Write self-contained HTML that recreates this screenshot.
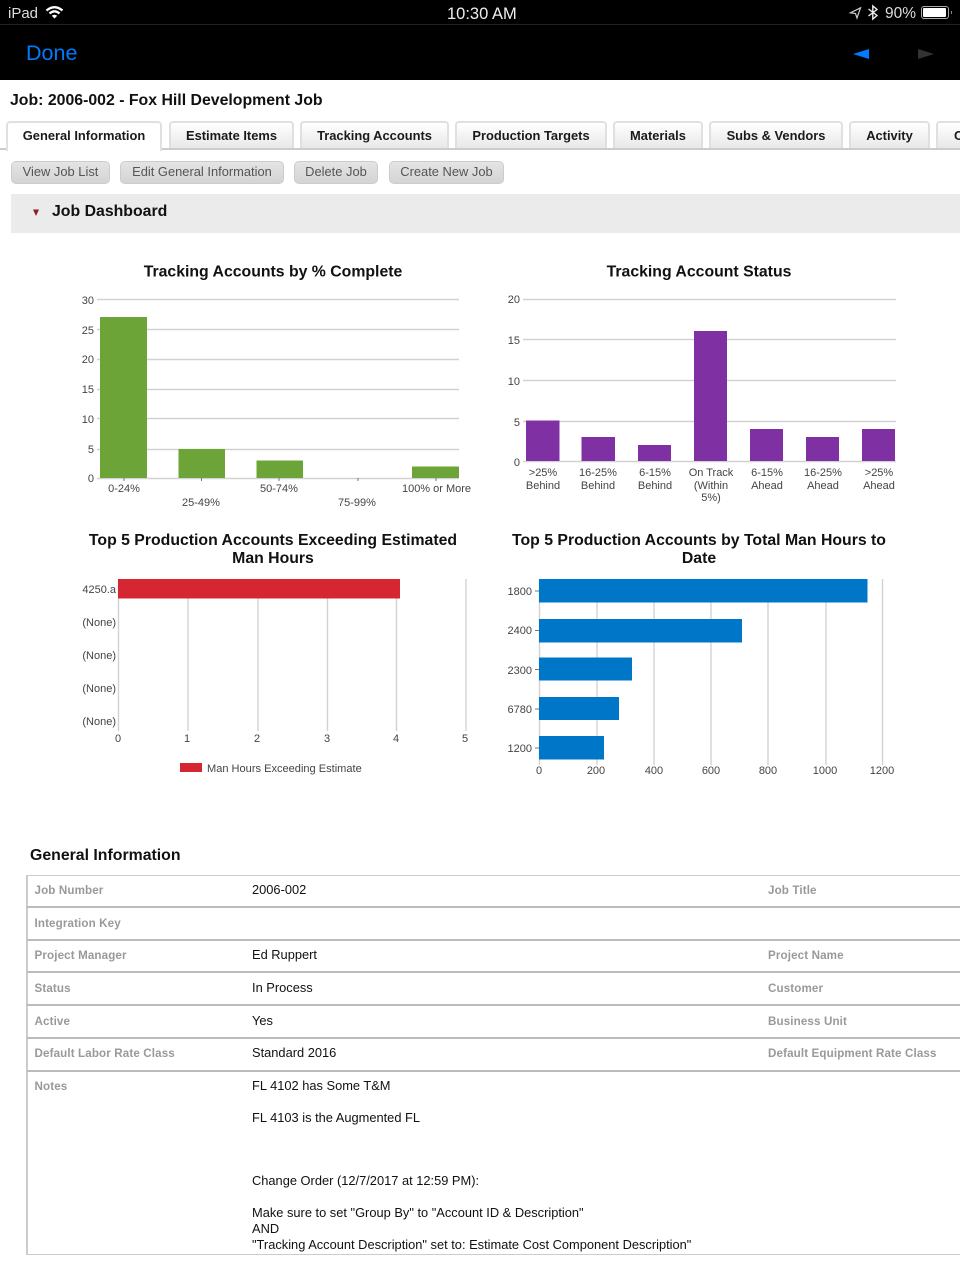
<!DOCTYPE html>
<html><head><meta charset="utf-8"><title>Job Dashboard</title>
<style>
html,body{margin:0;padding:0;background:#fff;width:960px;height:1280px;overflow:hidden}
body{position:relative;font-family:"Liberation Sans",sans-serif;color:#000}
#w{position:absolute;left:0;top:0;width:960px;height:1280px;overflow:hidden;background:#fff;filter:blur(.35px)}
.a{position:absolute;white-space:nowrap}
.tab{position:absolute;top:121px;height:27px;box-sizing:border-box;border:2px solid #e0e0e0;border-bottom:0;border-radius:4px 4px 0 0;background:linear-gradient(#fff,#e8e8e8);font:bold 12.9px/26px "Liberation Sans",sans-serif;color:#1a1a1a;text-align:center;white-space:nowrap;overflow:hidden}
.btn{position:absolute;top:161px;height:23px;box-sizing:border-box;border:1px solid #ccc;border-radius:5px;background:linear-gradient(#e4e4e4,#d4d4d4);font:12.9px/20px "Liberation Sans",sans-serif;color:#555;text-align:center;white-space:nowrap}
.l{position:absolute;left:27px;right:0;height:2px;background:#bbb}
.k{position:absolute;margin-top:1px;font:bold 11.6px/16px "Liberation Sans",sans-serif;color:#999;white-space:nowrap;letter-spacing:.13px}
.v{position:absolute;left:252px;font:12.85px/16px "Liberation Sans",sans-serif;color:#111;white-space:nowrap}
svg text{font-family:"Liberation Sans",sans-serif}
.t{font-weight:bold;font-size:15.82px;fill:#111;text-anchor:middle}
.c{font-size:11px;fill:#444;text-anchor:middle}
.r{font-size:11px;fill:#444;text-anchor:end}
</style></head><body><div id="w">
<div class="a" style="left:0;top:0;width:960px;height:80px;background:#000"></div>
<div class="a" style="left:0;top:24px;width:960px;height:1px;background:#222"></div>
<div class="a" style="left:8px;top:5px;font-size:15px;line-height:18px;color:#ddd">iPad</div>
<div class="a" style="left:447px;top:4.500px;font-size:16.500px;line-height:18px;color:#eee">10:30 AM</div>
<div class="a" style="left:885px;top:5px;font-size:15.500px;line-height:18px;color:#ddd">90%</div>
<div class="a" style="left:26px;top:40px;font-size:21.5px;line-height:26px;color:#007aff">Done</div>
<svg class="a" style="left:0;top:0" width="960" height="80" viewBox="0 0 960 80">
<g fill="none" stroke="#fff" stroke-width="2.300">
<path d="M46.500 10.500Q54.500 3.800 62.500 10.500"/><path d="M49.500 13.500Q54.500 9.200 59.500 13.500"/>
</g>
<path d="M51.800 15.800Q54.500 13.800 57.200 15.800L54.500 18.500Z" fill="#fff"/>
<path d="M850.500 12.800L860.500 7.800L857 18L855.500 13.500Z" fill="none" stroke="#ccc" stroke-width="1.200"/>
<path d="M868.500 9L877 15.500L872.800 19V6L877 9.500L868.500 16" fill="none" stroke="#eee" stroke-width="1.400"/>
<rect x="921.500" y="6.500" width="27" height="12" rx="2.500" fill="none" stroke="#aaa"/>
<rect x="923" y="8" width="23" height="9" rx="1" fill="#fff"/>
<path d="M951 11h1v3h-1z" fill="#888"/>
<path d="M869 49V59L853 54Z" fill="#007aff"/>
<path d="M918 49V59L934 54Z" fill="#333"/>
</svg>

<div class="a" style="left:10px;top:91px;font-weight:bold;font-size:15.85px;line-height:20px;color:#111">Job: 2006-002 - Fox Hill Development Job</div>

<div class="a" style="left:0;top:148px;width:960px;height:2px;background:#ccc"></div>
<div class="tab" style="left:6px;width:156px;height:30px;background:#fff">General Information</div>
<div class="tab" style="left:169px;width:125px">Estimate Items</div>
<div class="tab" style="left:300px;width:149px">Tracking Accounts</div>
<div class="tab" style="left:455px;width:152px">Production Targets</div>
<div class="tab" style="left:613px;width:90px">Materials</div>
<div class="tab" style="left:709px;width:134px">Subs &amp; Vendors</div>
<div class="tab" style="left:849px;width:81px">Activity</div>
<div class="tab" style="left:936px;width:60px;text-align:left;padding-left:16px">C</div>

<div class="btn" style="left:11px;width:99px">View Job List</div>
<div class="btn" style="left:120px;width:164px">Edit General Information</div>
<div class="btn" style="left:294px;width:84px">Delete Job</div>
<div class="btn" style="left:389px;width:115px">Create New Job</div>

<div class="a" style="left:11px;top:194px;width:949px;height:39px;background:#ebebeb"></div>
<svg class="a" style="left:32px;top:209px" width="8" height="8"><path d="M1 0.500H7L4 7Z" fill="#8e1f22"/></svg>
<div class="a" style="left:52px;top:202px;font-weight:bold;font-size:15.85px;line-height:20px;color:#111">Job Dashboard</div>

<svg class="a" style="left:0;top:250px" width="960" height="540" viewBox="0 250 960 540">
<text class="t" x="273" y="276.500">Tracking Accounts by % Complete</text>
<g stroke="#d2d2d2" stroke-width="1.400">
<path d="M97 299.500H459M97 329.500H459M97 359.500H459M97 389.500H459M97 418.500H459M97 449.500H459M97 478.500H459"/>
</g>
<g stroke="#777" stroke-width="1"><path d="M124 478v3M201.500 478v3M279 478v3M358 478v3M436 478v3"/></g>
<g fill="#6ca437">
<rect x="100" y="317" width="47" height="161"/>
<rect x="178.500" y="449" width="46.500" height="29"/>
<rect x="256.500" y="460.500" width="46.500" height="17.500"/>
<rect x="412" y="466.500" width="47" height="11.500"/>
</g>
<text class="r" x="94" y="304">30</text><text class="r" x="94" y="334">25</text><text class="r" x="94" y="363">20</text><text class="r" x="94" y="393">15</text><text class="r" x="94" y="423">10</text><text class="r" x="94" y="453">5</text><text class="r" x="94" y="482">0</text>
<text class="c" x="124" y="492">0-24%</text>
<text class="c" x="201" y="506">25-49%</text>
<text class="c" x="279" y="492">50-74%</text>
<text class="c" x="357" y="506">75-99%</text>
<text class="c" x="436.500" y="492">100% or More</text>

<text class="t" x="699" y="276.500">Tracking Account Status</text>
<g stroke="#d2d2d2" stroke-width="1.400"><path d="M523 299.500H896M523 339.500H896M523 380.500H896M523 421.500H896M523 461.500H896"/></g>
<g fill="#7f31a4">
<rect x="526" y="420.500" width="33.500" height="40.500"/>
<rect x="581.500" y="437" width="33.500" height="24"/>
<rect x="638" y="445" width="33" height="16"/>
<rect x="694" y="331" width="33" height="130"/>
<rect x="750" y="429" width="33" height="32"/>
<rect x="806" y="437" width="33" height="24"/>
<rect x="862" y="429" width="33" height="32"/>
</g>
<text class="r" x="520" y="303">20</text><text class="r" x="520" y="344">15</text><text class="r" x="520" y="385">10</text><text class="r" x="520" y="426">5</text><text class="r" x="520" y="466">0</text>
<text class="c" x="543" y="476">&gt;25%</text><text class="c" x="543" y="489">Behind</text>
<text class="c" x="598" y="476">16-25%</text><text class="c" x="598" y="489">Behind</text>
<text class="c" x="655" y="476">6-15%</text><text class="c" x="655" y="489">Behind</text>
<text class="c" x="711" y="476">On Track</text><text class="c" x="711" y="489">(Within</text><text class="c" x="711" y="501">5%)</text>
<text class="c" x="767" y="476">6-15%</text><text class="c" x="767" y="489">Ahead</text>
<text class="c" x="823" y="476">16-25%</text><text class="c" x="823" y="489">Ahead</text>
<text class="c" x="879" y="476">&gt;25%</text><text class="c" x="879" y="489">Ahead</text>

<text class="t" x="273" y="545">Top 5 Production Accounts Exceeding Estimated</text>
<text class="t" x="273" y="563">Man Hours</text>
<g stroke="#d2d2d2" stroke-width="1.400"><path d="M118.500 579V731M188 579V731M258 579V731M327.500 579V731M396.500 579V731M466 579V731"/></g>
<rect x="118" y="579" width="282" height="19.500" fill="#d52632"/>
<text class="r" x="116" y="593">4250.a</text><text class="r" x="116" y="626">(None)</text><text class="r" x="116" y="659">(None)</text><text class="r" x="116" y="692">(None)</text><text class="r" x="116" y="725">(None)</text>
<text class="c" x="118" y="742">0</text><text class="c" x="187" y="742">1</text><text class="c" x="257" y="742">2</text><text class="c" x="327" y="742">3</text><text class="c" x="396" y="742">4</text><text class="c" x="465" y="742">5</text>
<rect x="180" y="763" width="22" height="9" fill="#d52632"/>
<text x="207" y="772" font-size="11.05" fill="#444">Man Hours Exceeding Estimate</text>

<text class="t" x="699" y="545">Top 5 Production Accounts by Total Man Hours to</text>
<text class="t" x="699" y="563">Date</text>
<g stroke="#d2d2d2" stroke-width="1.400"><path d="M539.500 579V765M597 579V765M654 579V765M711 579V765M768 579V765M826 579V765M882.500 579V765"/></g>
<g stroke="#777" stroke-width="1"><path d="M535 591h4M535 630.500h4M535 669.500h4M535 709h4M535 748h4"/></g>
<g fill="#0076c9">
<rect x="539" y="579" width="328.500" height="23.500"/>
<rect x="539" y="619" width="203" height="23.500"/>
<rect x="539" y="657.500" width="93" height="23"/>
<rect x="539" y="697" width="80" height="23"/>
<rect x="539" y="736" width="65" height="23.500"/>
</g>
<text class="r" x="532" y="595">1800</text><text class="r" x="532" y="634">2400</text><text class="r" x="532" y="674">2300</text><text class="r" x="532" y="713">6780</text><text class="r" x="532" y="752">1200</text>
<text class="c" x="539" y="774">0</text><text class="c" x="596" y="774">200</text><text class="c" x="654" y="774">400</text><text class="c" x="711" y="774">600</text><text class="c" x="768" y="774">800</text><text class="c" x="825" y="774">1000</text><text class="c" x="882" y="774">1200</text>
</svg>

<div class="a" style="left:30px;top:845.500px;font-weight:bold;font-size:15.85px;line-height:20px;color:#111">General Information</div>

<div class="a" style="left:26px;top:875px;width:2px;height:380px;background:#ccc"></div>
<div class="l" style="top:875px;height:1px;background:#ccc"></div>
<div class="l" style="top:906px"></div>
<div class="l" style="top:939px"></div>
<div class="l" style="top:971px"></div>
<div class="l" style="top:1004px"></div>
<div class="l" style="top:1037px"></div>
<div class="l" style="top:1070px"></div>
<div class="l" style="top:1254px;height:1px;background:#ccc"></div>

<div class="k" style="left:34.500px;top:882px">Job Number</div>
<div class="k" style="left:34.500px;top:915px">Integration Key</div>
<div class="k" style="left:34.500px;top:947px">Project Manager</div>
<div class="k" style="left:34.500px;top:980px">Status</div>
<div class="k" style="left:34.500px;top:1013px">Active</div>
<div class="k" style="left:34.500px;top:1045px">Default Labor Rate Class</div>
<div class="k" style="left:34.500px;top:1078px">Notes</div>
<div class="k" style="left:768px;top:882px">Job Title</div>
<div class="k" style="left:768px;top:947px">Project Name</div>
<div class="k" style="left:768px;top:980px">Customer</div>
<div class="k" style="left:768px;top:1013px">Business Unit</div>
<div class="k" style="left:768px;top:1045px">Default Equipment Rate Class</div>

<div class="v" style="top:882px">2006-002</div>
<div class="v" style="top:947px">Ed Ruppert</div>
<div class="v" style="top:980px">In Process</div>
<div class="v" style="top:1013px">Yes</div>
<div class="v" style="top:1045px">Standard 2016</div>
<div class="v" style="top:1078px">FL 4102 has Some T&amp;M</div>
<div class="v" style="top:1110px">FL 4103 is the Augmented FL</div>
<div class="v" style="top:1173px">Change Order (12/7/2017 at 12:59 PM):</div>
<div class="v" style="top:1205px">Make sure to set "Group By" to "Account ID &amp; Description"</div>
<div class="v" style="top:1221px">AND</div>
<div class="v" style="top:1237px">"Tracking Account Description" set to: Estimate Cost Component Description"</div>
</div></body></html>
